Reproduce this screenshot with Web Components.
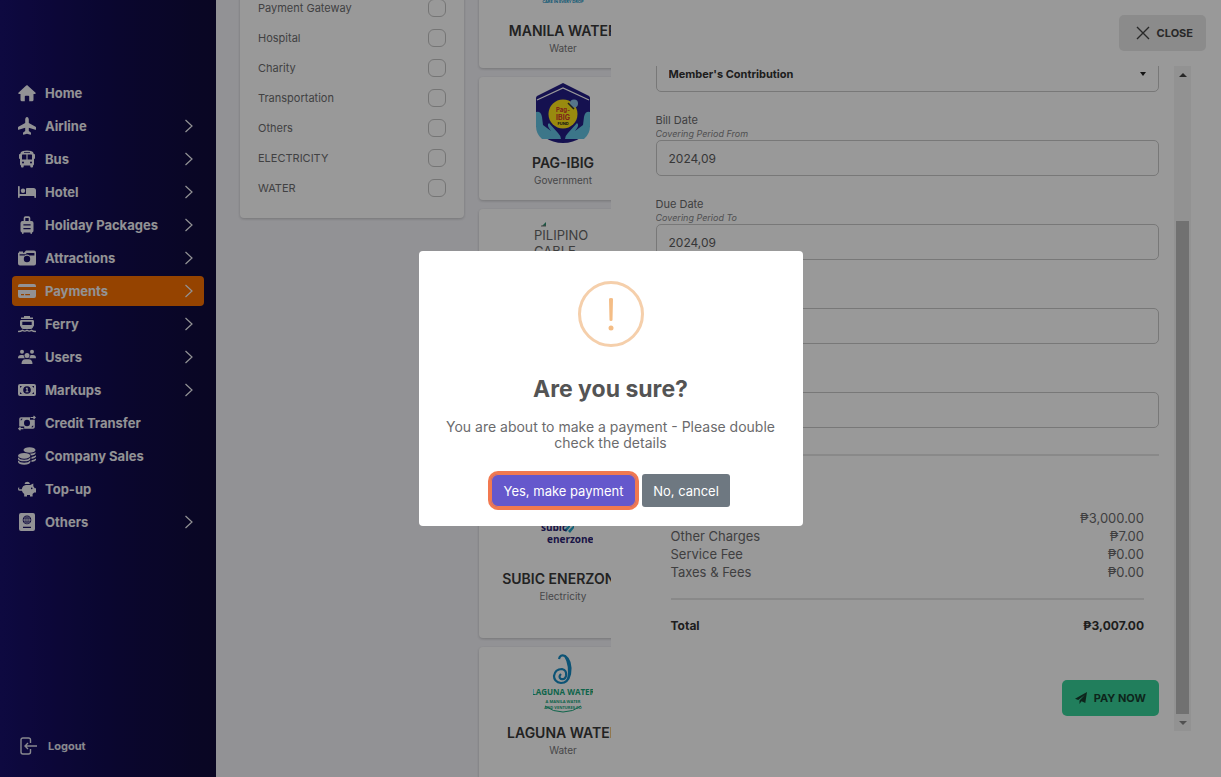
<!DOCTYPE html>
<html lang="en">
<head>
<meta charset="utf-8">
<meta name="viewport" content="width=device-width, initial-scale=1">
<title>Payments</title>
<style>
  html, body { margin: 0; height: 100%; }
  body { font-family: Inter, "Open Sans", sans-serif; overflow: hidden; }
</style>
</head>
<body>
<payments-app></payments-app>

<script>
const NAV_ICONS = {
  home: '<path d="M9 1 17.6 8.8Q18 10 17 10H15.5V16.1Q15.5 17.2 14.4 17.2H11.2V12.6Q11.2 11.8 10.4 11.8H7.6Q6.8 11.8 6.8 12.6V17.2H3.6Q2.5 17.2 2.5 16.1V10H1Q0 10 .4 8.8L8.2 1.5Q9 .8 9.8 1.5Z"/>',
  plane: '<path d="M9 0C10 0 10.8 1.3 10.8 2.6V5.9L17.6 9.8Q18 10 18 10.5V12.2Q18 12.9 17.3 12.7L10.8 10.8V14L12.8 15.5Q13 15.7 13 16V17.3Q13 17.8 12.5 17.7L9 16.7 5.5 17.7Q5 17.8 5 17.3V16Q5 15.7 5.2 15.5L7.2 14V10.8L.7 12.7Q0 12.9 0 12.2V10.5Q0 10 .4 9.8L7.2 5.9V2.6C7.2 1.3 8 0 9 0Z"/>',
  bus: '<path fill-rule="evenodd" d="M5 1Q9-.2 13 1Q15.6 1.6 15.8 4H16.2Q17 4 17 5V8Q17 9 16 9V14Q16 15.2 15 15.4V16.6Q15 17.5 14.1 17.5H13.2Q12.3 17.5 12.3 16.6V15.5H5.7V16.6Q5.7 17.5 4.8 17.5H3.9Q3 17.5 3 16.6V15.4Q2 15.2 2 14V9Q1 9 1 8V5Q1 4 1.8 4H2.2Q2.4 1.6 5 1ZM6 2.2V3.1H12V2.2ZM4 5V9.5H8.4V4.4H4.6Q4 4.4 4 5ZM9.6 4.4V9.5H14V5Q14 4.4 13.4 4.4ZM5 11.6A1 1 0 1 0 5 13.6A1 1 0 1 0 5 11.6ZM13 11.6A1 1 0 1 0 13 13.6A1 1 0 1 0 13 11.6Z"/>',
  bed: '<path d="M0 3.6Q0 3 .9 3Q1.7 3 1.7 3.6V11H8V6Q8 5 9 5H15.5Q18 5 18 7.6V14.3Q18 15 17.2 15Q16.3 15 16.3 14.3V13H1.7V14.3Q1.7 15 .9 15Q0 15 0 14.3Z"/><circle cx="5" cy="7.8" r="2.2"/>',
  suitcase: '<path fill-rule="evenodd" d="M5.7 5V2Q5.7.3 7.4.3H10.6Q12.3.3 12.3 2V5H13.5Q15.5 5 15.5 7V14.5Q15.5 16.3 14 16.5V17.2Q14 18 13.2 18Q12.4 18 12.4 17.2V16.5H5.6V17.2Q5.6 18 4.8 18Q4 18 4 17.2V16.5Q2.5 16.3 2.5 14.5V7Q2.5 5 4.5 5ZM7.3 5H10.7V1.9H7.3ZM5.4 8.3V9.5H12.6V8.3ZM5.4 12V13.2H12.6V12Z"/>',
  camera: '<path fill-rule="evenodd" d="M0 3.7H1V2.5H5V3.7H6L8 1.5H16Q18 1.5 18 3.5V14.5Q18 16.5 16 16.5H2Q0 16.5 0 14.5ZM1.6 5.2V6.5H6.6Q7.6 5.4 9 5.4T11.5 6.5H16.4V4H8.8L7.7 5.2ZM9 6.8A3.2 3.2 0 1 0 9 13.2A3.2 3.2 0 1 0 9 6.8Z"/>',
  card: '<path fill-rule="evenodd" d="M2 2H16Q18 2 18 4V5H0V4Q0 2 2 2ZM0 8H18V14Q18 16 16 16H2Q0 16 0 14ZM3 12V13.2H6V12ZM7.2 12V13.2H12V12Z"/>',
  ferry: '<path fill-rule="evenodd" d="M6 1H12V2.5H15V4H3V2.5H6ZM3.2 5H14.8Q16 5 16 6.2V10.5L14.5 13Q14 14 12.5 14H5.5Q4 14 3.5 13L2 10.5V6.2Q2 5 3.2 5ZM4.3 6.8V10H13.7V6.8Z"/><path d="M0 16.4Q2.3 16.6 4.5 15.3Q6.800 17 9 15.300Q11.200 17 13.500 15.300Q15.700 16.600 18 16.400" fill="none" stroke="currentColor" stroke-width="1.4"/>',
  users: '<circle cx="4" cy="3.800" r="2"/><circle cx="14" cy="3.800" r="2"/><circle cx="9" cy="7.500" r="2.500"/><path d="M0 10.300Q0 7 3 7H5Q5.400 7 5.700 7.200Q5.700 9.300 7 10.300ZM18 10.300Q18 7 15 7H13Q12.600 7 12.300 7.200Q12.300 9.300 11 10.300ZM3.500 16Q3.500 11.300 7.500 11.300H10.500Q14.500 11.300 14.500 16Z"/>',
  money: '<path fill-rule="evenodd" d="M2 3H16Q18 3 18 5V13Q18 15 16 15H2Q0 15 0 13V5Q0 3 2 3ZM2 5V7L4 5ZM16 5H14L16 7ZM2 13H4L2 11ZM16 13V11L14 13ZM9 5.2A3.8 3.8 0 1 0 9 12.8A3.8 3.8 0 1 0 9 5.2ZM8 6.8H9.7V10.3H10.5V11.3H7.6V10.3H8.5V7.9H7.8Z"/>',
  transfer: '<path fill-rule="evenodd" d="M3 3.200H12V5.800H16.800V13Q16.800 14.800 15 14.800H6.200V12.400H1.200V5Q1.200 3.200 3 3.200ZM2.800 4.800V6.800L4.800 4.800ZM15.200 13.200V11.200L13.200 13.200ZM9 5.700A3 3.300 0 1 0 9 12.300A3 3.300 0 1 0 9 5.700Z"/><path d="M12.500 3.500H17M15.500 2 17.200 3.500 15.500 5M5.500 14.700H1M2.500 13.200.8 14.700 2.500 16.200" fill="none" stroke="currentColor" stroke-width="1.200"/>',
  coins: '<ellipse cx="11.5" cy="3" rx="6" ry="2.8"/><ellipse cx="6.2" cy="8.8" rx="6.2" ry="2.9"/><path d="M0 10.3Q1.8 12.8 6.2 12.8T12.4 10.3V12Q11.5 14.3 6.2 14.3T0 12ZM0 13.6Q1.8 15.8 6.2 15.8T12.4 13.6V15Q11.5 17.7 6.2 17.7T0 15ZM17.5 5V6.5Q17 8 13.5 8.6Q12.8 7.3 11.5 6.7Q16 6.7 17.5 5ZM18 8.3V9.8Q17.2 11.3 13.5 11.9V9.9Q16.8 9.6 18 8.3ZM18 11.6V13Q17.2 14.6 13.5 15V13.2Q16.8 12.8 18 11.6Z"/>',
  pig: '<path fill-rule="evenodd" d="M6.500 3.900A2.800 2.800 0 0 1 12 3.900ZM8 5H12.300L15.300 3.400V6.200Q16.200 7 16.700 8.200H18V12.500H16.200L14.600 14V16.600H12V15H9V16.600H6.200V14Q4.400 12.900 3.900 10.800H2Q0 10.800 0 8.900Q0 7.500 1.200 7.200V9.300H3.800Q4.300 5.600 8 5ZM13.700 7.600A.8.8 0 1 0 13.700 9.200A.8.8 0 1 0 13.700 7.600Z"/>',
  passport: '<path fill-rule="evenodd" d="M3 0H15Q17 0 17 2V16Q17 18 15 18H3Q1 18 1 16V2Q1 0 3 0ZM9 2.6A4.3 4.3 0 1 0 9 11.2A4.3 4.3 0 1 0 9 2.6ZM5 13.8V15H13V13.8Z"/><path d="M5 7H13M9 3V11M7.2 3.6Q6.3 7 7.2 10.4M10.8 3.6Q11.7 7 10.8 10.4" fill="none" stroke="currentColor" stroke-width=".8"/>'
};

const LOGOS = {
  manila: `<svg width="60" height="60" viewBox="0 0 60 60" aria-hidden="true"><path d="M30 4Q46 24 42 36Q34 30 18 36Q16 24 30 4Z" fill="#1a9ad6"/><text x="30" y="52" text-anchor="middle" font-family="Lato" font-weight="900" font-size="4" fill="#0f8fc0">CARE IN EVERY DROP</text></svg>`,
  pagibig: `<svg width="60" height="60" viewBox="0 0 60 60" role="img" aria-label="Pag-IBIG Fund">
    <path d="M30 0 56 13Q57 14 57 15V43Q53 49 49 54Q40 60 30 60T11 54Q7 49 3 43V15Q3 14 4 13Z" fill="#241d86"/>
    <path d="M4 17 30 5 56 17" fill="none" stroke="#fff" stroke-width="1.2"/>
    <path d="M3 29Q8 28 9 34L10 42L18 48Q13 42 16 40L25 50Q28 53 28 56H9Q3 51 3 43ZM57 29Q52 28 51 34L50 42L42 48Q47 42 44 40L35 50Q32 53 32 56H51Q57 51 57 43Z" fill="#65c5e4"/>
    <circle cx="30" cy="31" r="14.5" fill="#ffe71a"/>
    <circle cx="41" cy="20.500" r="4" fill="#8fc4e8"/><path d="M35 20 41 26" stroke="#333" stroke-width="1.500"/>
    <g font-family="Inter" font-weight="700" text-anchor="middle"><text x="30" y="29" font-size="6" fill="#d3342b">Pag-</text><text x="30" y="37" font-size="7" fill="#d3342b">IBIG</text><text x="30" y="42" font-size="4" fill="#222">FUND</text></g></svg>`,
  pilipino: `<svg width="60" height="60" viewBox="0 0 60 60" role="img" aria-label="Pilipino Cable"><path d="M13 7V11H9Z" fill="#2f8f70"/><path d="M8 11H13" stroke="#777"/><g font-family="Inter" font-size="13" fill="#666"><text x="1" y="25">PILIPINO</text><text x="1" y="41">CABLE</text></g></svg>`,
  subic: `<svg width="60" height="60" viewBox="0 0 60 60" role="img" aria-label="Subic Enerzone"><path d="M31 31 37 25V28L33 33ZM35 32 41 26V29L37 34Z" fill="#21a3c8"/><g font-family="Open Sans" font-weight="700" fill="#2c2474"><text x="8" y="32" font-size="10">subic</text><text x="14" y="44" font-size="10">enerzone</text></g></svg>`,
  laguna: `<svg width="60" height="60" viewBox="0 0 60 60" role="img" aria-label="Laguna Water">
    <path d="M26 6Q27 1 32 3Q39 8 37 21Q35 30 28 30Q21 29 21 23Q22 16 29 16Q34 17 33 23Q32 27 28 26Q25 24 28 21" fill="none" stroke="#168bc4" stroke-width="2.200"/><path d="M31 3Q43 12 34 27Q37 13 31 3Z" fill="#168bc4"/>
    <g text-anchor="middle" font-family="Open Sans" font-weight="700" fill="#18a77c"><text x="30" y="42" font-size="8">LAGUNA WATER</text><text x="30" y="50" font-size="4">A MANILA WATER</text><text x="30" y="56" font-size="4">AND VENTURES CO</text></g><path d="M12 53Q20 59 30 59T48 53" stroke="#18a77c" fill="none"/></svg>`
};

class BaseElement extends HTMLElement {
  constructor() {
    super();
    this.attachShadow({ mode: 'open' });
  }
  connectedCallback() {
    this.shadowRoot.innerHTML = `<style>*{box-sizing:border-box}:host([hidden]){display:none}${this.styles()}</style>${this.markup()}`;
  }
  attr(name) { return this.getAttribute(name) || ''; }
}

customElements.define('nav-item', class extends BaseElement {
  styles() {
    return `
      :host { display: block; }
      a { display: flex; align-items: center; height: 30px; padding: 0 10px 0 6px; border-radius: 4px; text-decoration: none; font-size: 13px; font-weight: 700; color: #f4f4f8; }
      :host([active]) a { background: #f97000; }
      .icon { width: 18px; height: 18px; margin-right: 9px; fill: currentColor; }
      .label { flex: 1; white-space: nowrap; }
      .chevron { width: 10px; height: 14px; fill: none; stroke: currentColor; stroke-width: 1.2; }`;
  }
  markup() {
    const chevron = this.hasAttribute('expandable')
      ? '<svg class="chevron" viewBox="0 0 10 14" aria-hidden="true"><path d="M1.500 1 8 7 1.500 13"/></svg>' : '';
    return `<a href="#"><svg class="icon" viewBox="0 0 18 18" aria-hidden="true">${NAV_ICONS[this.attr('icon')]}</svg><span class="label"><slot></slot></span>${chevron}</a>`;
  }
});

customElements.define('side-bar', class extends BaseElement {
  styles() {
    return `
      :host { display: flex; flex-direction: column; justify-content: space-between; padding: 78px 12px 16px; background: linear-gradient(90deg, #180f6c 0%, #110b50 50%, #100b3a 100%); }
      nav { display: grid; gap: 3px; }
      .logout { display: flex; align-items: center; gap: 10px; height: 30px; padding-left: 8px; color: #e4e4ee; font-size: 11px; font-weight: 700; text-decoration: none; }
      .logout svg { width: 18px; height: 18px; fill: none; stroke: currentColor; stroke-width: 1.4; }`;
  }
  markup() {
    return `<nav><slot></slot></nav>
      <a class="logout" href="#"><svg viewBox="0 0 18 18" aria-hidden="true"><path d="M10.500 6V3Q10.500 1 8.500 1H3Q1 1 1 3V15Q1 17 3 17H8.500Q10.500 17 10.500 15V12M17 9H5M8 6 5 9 8 12"/></svg>Logout</a>`;
  }
});

customElements.define('filter-option', class extends BaseElement {
  styles() {
    return `
      :host { display: block; }
      label { display: flex; align-items: center; justify-content: space-between; height: 30px; font-size: 11px; color: #6d6d6f; }
      input { appearance: none; width: 18px; height: 18px; margin: 0; border: 1px solid #c4c4c4; border-radius: 6px; }`;
  }
  markup() { return `<label><slot></slot><input type="checkbox"></label>`; }
});

customElements.define('filter-panel', class extends BaseElement {
  styles() {
    return `
      :host { display: block; margin-top: -7px; padding: 0 18px 15px; background: #fff; border-radius: 0 0 4px 4px; box-shadow: 0 1px 3px #0003; }`;
  }
  markup() { return `<slot></slot>`; }
});

customElements.define('biller-card', class extends BaseElement {
  styles() {
    return `
      :host { display: flex; flex-direction: column; align-items: center; padding-top: 6px; background: #fff; border-radius: 4px; box-shadow: 0 1px 3px #0003; min-width: 0; }
      svg { display: block; }
      h3 { margin: 10px 0 0; font-size: 14px; line-height: 20px; font-weight: 600; color: #3a3a3a; white-space: nowrap; }
      p { margin: 0; font-size: 10px; line-height: 14px; color: #77777a; }`;
  }
  markup() { return `${LOGOS[this.attr('logo')] || ''}<h3><slot></slot></h3><p>${this.attr('category')}</p>`; }
});

customElements.define('biller-grid', class extends BaseElement {
  styles() {
    return `
      :host { display: grid; grid-template-columns: repeat(4, minmax(0, 1fr)); grid-template-rows: 123px 123px 133px 133px 145px 145px; grid-auto-flow: column; gap: 9px; margin-top: -55px; }`;
  }
  markup() { return `<slot></slot>`; }
});

customElements.define('form-field', class extends BaseElement {
  styles() {
    return `
      :host { display: block; }
      label { display: block; height: 27px; }
      b, i { display: block; font-weight: 400; }
      b { font-size: 11px; line-height: 14px; color: #6a6a6c; }
      i { font-size: 9px; line-height: 14px; color: #858587; }
      input { display: block; width: 100%; height: 36px; padding: 0 12px; border: 1px solid #c8c8c8; border-radius: 5px; background: transparent; color: #5c5c5e; font: 12px Inter, sans-serif; outline: 0; }`;
  }
  markup() {
    return `<label for="field"><b>${this.attr('label')}</b><i>${this.attr('hint')}</i></label><input id="field" type="text" value="${this.attr('value')}">`;
  }
});

customElements.define('program-select', class extends BaseElement {
  styles() {
    return `
      :host { display: grid; align-items: center; }
      select, svg { grid-area: 1 / 1; }
      select { appearance: none; width: 100%; height: 36px; padding: 0 12px; border: 1px solid #c8c8c8; border-radius: 5px; background: transparent; color: #333; font: 700 11px Inter, sans-serif; }
      svg { justify-self: end; margin-right: 13px; pointer-events: none; }`;
  }
  markup() {
    return `<select aria-label="Program"><option>Member's Contribution</option></select><svg width="6" height="4" viewBox="0 0 6 4" aria-hidden="true"><path d="M0 0H6L3 4Z" fill="#222"/></svg>`;
  }
});

customElements.define('scroll-track', class extends BaseElement {
  styles() {
    return `
      :host { display: grid; grid-template-rows: 17px 138px 1fr 17px; justify-items: center; width: 17px; background: #f3f3f3; }
      svg { align-self: center; }
      .thumb { grid-row: 3; width: 13px; background: #bdbdbd; }
      .down { grid-row: 4; }`;
  }
  markup() {
    return `<svg width="8" height="4" viewBox="0 0 8 4" aria-hidden="true"><path d="M0 4 4 0 8 4Z" fill="#444"/></svg><div class="thumb"></div><svg class="down" width="8" height="4" viewBox="0 0 8 4" aria-hidden="true"><path d="M0 0 4 4 8 0Z" fill="#888"/></svg>`;
  }
});

customElements.define('fee-summary', class extends BaseElement {
  styles() {
    return `
      :host { display: block; margin-top: 26px; border-top: 2px solid #e4e4e4; padding: 53px 15px 0; }
      table { width: 100%; border-collapse: collapse; font-size: 13px; color: #6a6a6c; }
      th { font-weight: 400; text-align: left; }
      td { text-align: right; }
      th, td { height: 18px; padding: 0; line-height: 18px; }
      tfoot th, tfoot td { font-size: 12px; font-weight: 700; color: #333; }
      tfoot tr.rule td { height: 36px; }
      hr { margin: 0; border: 0; border-top: 2px solid #e4e4e4; }`;
  }
  markup() {
    return `<table><tbody>
      <tr><th></th><td>₱3,000.00</td></tr>
      <tr><th>Other Charges</th><td>₱7.00</td></tr>
      <tr><th>Service Fee</th><td>₱0.00</td></tr>
      <tr><th>Taxes &amp; Fees</th><td>₱0.00</td></tr></tbody>
      <tfoot><tr class="rule"><td colspan="2"><hr></td></tr><tr><th>Total</th><td>₱3,007.00</td></tr></tfoot></table>`;
  }
});

customElements.define('payment-drawer', class extends BaseElement {
  styles() {
    return `
      :host { display: flex; flex-direction: column; padding: 15px 15px 46px 45px; background: #fff; }
      button { display: flex; align-items: center; justify-content: center; gap: 7px; height: 36px; border: 0; border-radius: 5px; font: 700 11px Inter, sans-serif; }
      .close { align-self: flex-end; padding: 0 13px 0 17px; background: #e8e8e8; color: #444; margin-bottom: 15px; flex: none; }
      .body { display: grid; grid-template-columns: 1fr auto; gap: 15px; flex: 1; min-height: 0; padding-right: 15px; }
      .form { overflow: hidden; min-height: 0; }
      .stack { display: grid; gap: 21px; margin-top: -10px; }
      .pay { margin: 45px 0 0 auto; padding: 0 13px; background: #37d399; color: #173f30; }`;
  }
  markup() {
    return `<button class="close"><svg width="14" height="14" viewBox="0 0 14 14" aria-hidden="true"><path d="M1 1 13 13M13 1 1 13" stroke="currentColor" stroke-width="1.400"/></svg>CLOSE</button>
      <div class="body"><div class="form">
        <div class="stack">
          <program-select></program-select>
          <form-field label="Bill Date" hint="Covering Period From" value="2024,09"></form-field>
          <form-field label="Due Date" hint="Covering Period To" value="2024,09"></form-field>
          <form-field></form-field>
          <form-field></form-field>
        </div>
        <fee-summary></fee-summary>
        <button class="pay"><svg width="12" height="12" viewBox="0 0 12 12" aria-hidden="true"><path d="M12 0 10.300 11 6.500 9.300 4.500 12V8.500L9.800 3 3.200 8 0 6.700Z" fill="currentColor"/></svg>PAY NOW</button>
      </div><scroll-track></scroll-track></div>`;
  }
});

customElements.define('confirm-dialog', class extends BaseElement {
  styles() {
    return `
      :host { position: fixed; inset: 0; display: grid; place-items: center; background: rgba(0, 0, 0, .4); }
      .box { width: 384px; padding: 30px 18px 19px; border-radius: 4px; background: #fff; text-align: center; }
      .mark { display: block; margin: 0 auto; }
      h2 { margin: 26px 0 14px; font-size: 23px; line-height: 32px; font-weight: 700; color: #545454; }
      p { margin: 0 0 23px; font-size: 14px; line-height: 16px; color: #6b6b6d; }
      .actions { display: flex; justify-content: center; gap: 6px; }
      button { height: 33px; padding: 0; border: 0; border-radius: 3px; color: #fff; font: 400 13px Inter, sans-serif; }
      .yes { width: 145px; background: #6558cc; border-radius: 7px; box-shadow: 0 0 0 3px #f27950, inset 0 0 0 1px #f27950; }
      .no { width: 88px; background: #6e7881; }`;
  }
  markup() {
    return `<div class="box" role="dialog" aria-modal="true" aria-labelledby="title">
      <svg class="mark" width="66" height="66" viewBox="0 0 66 66" aria-hidden="true"><circle cx="33" cy="33" r="31.500" fill="none" stroke="#f5cfab" stroke-width="3"/><path d="M31 18Q31 17 33 17T35 18L34.500 39Q34.500 40 33 40T31.500 39Z" fill="#f4bd86"/><circle cx="33" cy="47" r="2.500" fill="#f4bd86"/></svg>
      <h2 id="title">Are you sure?</h2>
      <p>You are about to make a payment - Please double check the details</p>
      <div class="actions"><button class="yes">Yes, make payment</button><button class="no">No, cancel</button></div>
    </div>`;
  }
});

customElements.define('payments-app', class extends BaseElement {
  styles() {
    return `
      :host { position: relative; display: grid; grid-template-columns: 216px 1fr; height: 100vh; overflow: hidden; background: #f4f4f9; }
      main { display: grid; grid-template-columns: 224px 1fr; align-items: start; gap: 15px; padding: 0 43px 0 24px; min-height: 0; overflow: hidden; }
      payment-drawer { position: absolute; inset: 0 0 0 50%; }`;
  }
  markup() {
    const nav = [['home','Home'],['plane','Airline',1],['bus','Bus',1],['bed','Hotel',1],['suitcase','Holiday Packages',1],['camera','Attractions',1],['card','Payments',1],['ferry','Ferry',1],['users','Users',1],['money','Markups',1],['transfer','Credit Transfer'],['coins','Company Sales'],['pig','Top-up'],['passport','Others',1]];
    const filters = ['Payment Gateway','Hospital','Charity','Transportation','Others','ELECTRICITY','WATER'];
    return `
      <side-bar>${nav.map(([icon, label, more]) => `<nav-item icon="${icon}"${more ? ' expandable' : ''}${label === 'Payments' ? ' active' : ''}>${label}</nav-item>`).join('')}</side-bar>
      <main>
        <filter-panel>${filters.map(f => `<filter-option>${f}</filter-option>`).join('')}</filter-panel>
        <biller-grid>
          <biller-card logo="manila" category="Water">MANILA WATER</biller-card>
          <biller-card logo="pagibig" category="Government">PAG-IBIG</biller-card>
          <biller-card logo="pilipino"></biller-card>
          <biller-card></biller-card>
          <biller-card logo="subic" category="Electricity">SUBIC ENERZONE</biller-card>
          <biller-card logo="laguna" category="Water">LAGUNA WATER</biller-card>
        </biller-grid>
      </main>
      <payment-drawer></payment-drawer>
      <confirm-dialog></confirm-dialog>`;
  }
});
</script>
</body>
</html>
